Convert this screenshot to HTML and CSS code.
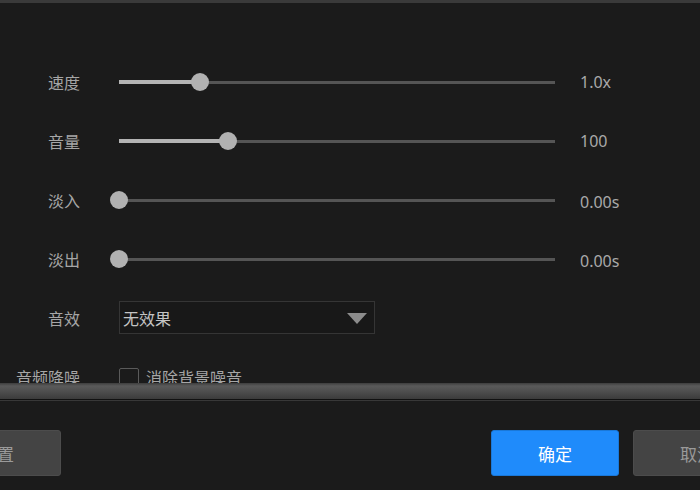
FILE: index.html
```html
<!DOCTYPE html>
<html lang="zh-CN">
<head>
<meta charset="utf-8">
<title>音频设置</title>
<link rel="stylesheet" href="styles.css">
</head>
<body>
<div class="dialog">
  <div class="topbar"></div>
  <div class="content">
    <div class="row">
      <span class="label">速度</span>
      <div class="slider">
        <div class="track"></div>
        <div class="fill" style="width:81px"></div>
        <div class="knob" style="left:81px"></div>
      </div>
      <span class="value">1.0x</span>
    </div>
    <div class="row">
      <span class="label">音量</span>
      <div class="slider">
        <div class="track"></div>
        <div class="fill" style="width:109px"></div>
        <div class="knob" style="left:109px"></div>
      </div>
      <span class="value">100</span>
    </div>
    <div class="row">
      <span class="label">淡入</span>
      <div class="slider">
        <div class="track"></div>
        <div class="fill" style="width:0px"></div>
        <div class="knob" style="left:0px"></div>
      </div>
      <span class="value low">0.00s</span>
    </div>
    <div class="row">
      <span class="label">淡出</span>
      <div class="slider">
        <div class="track"></div>
        <div class="fill" style="width:0px"></div>
        <div class="knob" style="left:0px"></div>
      </div>
      <span class="value low">0.00s</span>
    </div>
    <div class="row">
      <span class="label">音效</span>
      <div class="select">
        <span class="select-text">无效果</span>
        <svg class="caret" width="20" height="11" viewBox="0 0 20 11"><polygon points="0,0 20,0 10,11" fill="#8c8c8c"/></svg>
      </div>
    </div>
    <div class="row">
      <span class="label">音频降噪</span>
      <label class="check">
        <span class="box"></span>
        <span class="check-text">消除背景噪音</span>
      </label>
    </div>
  </div>
  <div class="hscroll"></div>
  <div class="sep"></div>
  <div class="footer">
    <button class="btn btn-gray">重置</button>
    <div class="right">
      <button class="btn btn-primary">确定</button>
      <button class="btn btn-gray">取消</button>
    </div>
  </div>
</div>
</body>
</html>
```
FILE: styles.css
```css
html, body {
  margin: 0;
  padding: 0;
  background: #1b1b1b;
}
body {
  width: 700px;
  height: 490px;
  overflow: hidden;
  font-family: "Noto Sans", "Noto Sans CJK SC", sans-serif;
}
.dialog {
  width: 700px;
  height: 490px;
  display: flex;
  flex-direction: column;
  background: #1b1b1b;
}
.topbar {
  height: 3px;
  background: #3a3a3a;
  flex: none;
}
.content {
  height: 380px;
  flex: none;
  overflow: hidden;
  padding-top: 49px;
  box-sizing: border-box;
}
.row {
  height: 59px;
  display: flex;
  align-items: center;
}
.label {
  width: 80px;
  flex: none;
  text-align: right;
  margin-right: 39px;
  font-size: 16px;
  color: #a6a6a6;
  white-space: nowrap;
}
.slider {
  position: relative;
  width: 436px;
  height: 18px;
  flex: none;
}
.track {
  position: absolute;
  left: 0;
  right: 0;
  top: 8px;
  height: 3px;
  background: #555555;
}
.fill {
  position: absolute;
  left: 0;
  top: 7px;
  height: 4px;
  background: #b4b4b4;
}
.knob {
  position: absolute;
  top: 0;
  width: 18px;
  height: 18px;
  margin-left: -9px;
  border-radius: 50%;
  background: #b1b1b1;
}
.value {
  margin-left: 25px;
  font-size: 16px;
  color: #a9a9a9;
}
.value.low {
  margin-top: 5px;
}
.select {
  width: 256px;
  height: 33px;
  box-sizing: border-box;
  border: 1px solid #353535;
  background: #181818;
  display: flex;
  align-items: center;
  justify-content: space-between;
  padding: 0 7px 0 3px;
}
.select-text {
  font-size: 16px;
  color: #c4c4c4;
}
.caret {
  display: block;
  margin-top: 1px;
}
.check {
  display: flex;
  align-items: center;
  gap: 7px;
}
.box {
  width: 20px;
  height: 20px;
  box-sizing: border-box;
  border: 1px solid #5a5a5a;
  border-radius: 2px;
  margin-top: 3px;
}
.check-text {
  font-size: 16px;
  color: #a6a6a6;
}
.hscroll {
  height: 16px;
  flex: none;
  background: linear-gradient(to bottom, #3d3d3d 0px, #5a5a5a 3px, #4f4f4f 8px, #3b3b3b 16px);
}
.sep {
  height: 3px;
  flex: none;
  background: linear-gradient(to bottom, #111111 0px, #111111 1px, #383838 1px, #383838 2px, #1b1b1b 2px);
}
.footer {
  flex: none;
  margin-left: -67px;
  width: 828px;
  padding-top: 28px;
  display: flex;
  justify-content: space-between;
}
.right {
  display: flex;
  gap: 14px;
}
.btn {
  width: 128px;
  height: 46px;
  border-radius: 3px;
  font-family: "Noto Sans CJK SC", sans-serif;
  font-size: 17px;
  cursor: pointer;
}
.btn-gray {
  background: #444444;
  border: 1px solid #4c4c4c;
  color: #9a9a9a;
}
.btn-primary {
  background: #1f8bfb;
  border: 1px solid #1a78d8;
  color: #ffffff;
}
```
